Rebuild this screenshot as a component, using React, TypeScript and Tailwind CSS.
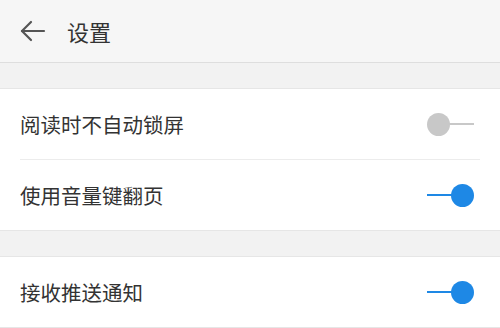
import React, { useState } from 'react';

function Toggle({ on, onClick }: { on: boolean; onClick: () => void }) {
  return (
    <button onClick={onClick} className="relative w-[47px] h-[23px] shrink-0" aria-label="toggle">
      <span
        className={`absolute top-[10.5px] h-[2px] w-[26px] ${on ? 'left-0 bg-[#1e88e5]' : 'right-0 bg-[#c8c8c8]'}`}
      />
      <span
        className={`absolute top-0 w-[23px] h-[23px] rounded-full ${on ? 'right-0 bg-[#1e88e5]' : 'left-0 bg-[#c8c8c8]'}`}
      />
    </button>
  );
}

function Row({ label, on, onClick }: { label: string; on: boolean; onClick: () => void }) {
  return (
    <div className="h-[70px] flex items-center justify-between pl-[20px] pr-[26px]">
      <span className="text-[20.5px] text-[#333333]">{label}</span>
      <Toggle on={on} onClick={onClick} />
    </div>
  );
}

export default function App() {
  const [noLock, setNoLock] = useState(false);
  const [volumeKey, setVolumeKey] = useState(true);
  const [push, setPush] = useState(true);

  return (
    <div
      className="w-[500px] h-[328px] overflow-hidden bg-[#f2f2f2]"
      style={{ fontFamily: '"Noto Sans CJK SC", "Noto Sans", sans-serif' }}
    >
      {/* Header */}
      <div className="h-[63px] flex items-center bg-[#f6f6f6] border-b border-[#dedede]">
        <button className="ml-[19px] w-[28px] h-[28px] flex items-center justify-center" aria-label="back">
          <svg width="28" height="28" viewBox="0 0 28 28" fill="none" stroke="#555555" strokeWidth="2.2" strokeLinecap="round" strokeLinejoin="round">
            <path d="M25 14H3" />
            <path d="M12 5L3 14l9 9" />
          </svg>
        </button>
        <span className="ml-[20px] text-[22px] text-[#333333]">设置</span>
      </div>

      <div className="h-[25px]" />

      {/* Group 1 */}
      <div className="bg-white border-t border-[#e6e6e6] border-b">
        <Row label="阅读时不自动锁屏" on={noLock} onClick={() => setNoLock(!noLock)} />
        <div className="mx-[20px] h-px bg-[#ececec]" />
        <Row label="使用音量键翻页" on={volumeKey} onClick={() => setVolumeKey(!volumeKey)} />
      </div>

      <div className="h-[25px]" />

      {/* Group 2 */}
      <div className="bg-white border-t border-b border-[#e6e6e6]">
        <Row label="接收推送通知" on={push} onClick={() => setPush(!push)} />
      </div>
    </div>
  );
}
